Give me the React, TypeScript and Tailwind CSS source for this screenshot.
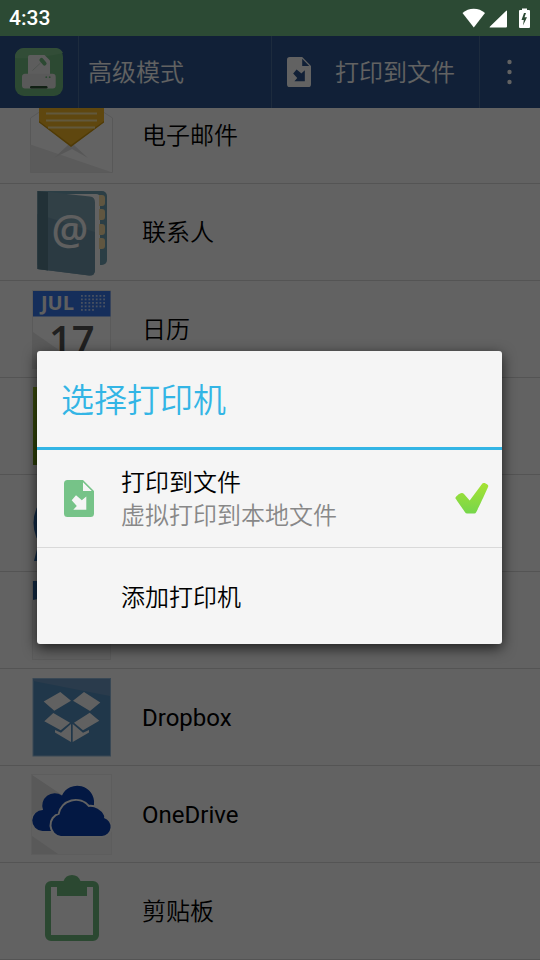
import type { ReactNode } from "react";
import clsx from "clsx";

const FileIcon = ({ className, arrow }: { className: string; arrow: string }) => (
    <svg viewBox="0 0 30 37" preserveAspectRatio="none" className={className} aria-hidden="true">
        <path fill="currentColor" d="M3.5 0H19l11 11v22.5a3.5 3.5 0 0 1-3.5 3.5h-23A3.5 3.5 0 0 1 0 33.5v-30A3.5 3.5 0 0 1 3.5 0z" />
        <path fill={arrow} d="M19 2.2V11h8.8zM12 15.3l5 4.2.8.8 4.5-3.9v13.4H9.3l3.5-3.9-5.1-5.6z" />
    </svg>
);

const AppLogo = () => (
    <svg viewBox="0 0 48 48" className="size-12" aria-hidden="true">
        <rect width="48" height="48" rx="9" fill="#6fb67d" />
        <path d="M0 10C12 11 30 9 48 5a9 9 0 0 0-9-5H9a9 9 0 0 0-9 10z" fill="#7ec08b" />
        <path d="M13 9a2 2 0 0 1 2-2h14.5l5.5 5.5V27H13z" fill="#e9e9e9" />
        <path d="M17.5 22.5l8-7.5" stroke="#c4d0c7" strokeWidth="1" />
        <path d="M26.5 12l3 3.5" stroke="#6fb67d" strokeWidth="4.2" strokeLinecap="round" />
        <path d="M10 25.7h27.5a3.2 3.2 0 0 1 3.2 3.2v8.6a3 3 0 0 1-3 3H10a3 3 0 0 1-3-3v-8.6a3.2 3.2 0 0 1 3-3.2z" fill="#dedede" />
        <rect x="15" y="38" width="17.5" height="2.5" rx="1.2" fill="#2c5034" />
        <circle cx="31.3" cy="29.2" r=".9" fill="#6fb67d" />
        <circle cx="34.7" cy="29.2" r=".9" fill="#6fb67d" />
    </svg>
);

const CheckMark = () => (
    <svg viewBox="0 0 34 31" className="h-[31px] w-[34px] shrink-0" aria-hidden="true">
        <defs>
            <linearGradient id="tick" x1="0" y1="0" x2="0" y2="1">
                <stop offset="0" stopColor="#a6e233" />
                <stop offset="1" stopColor="#76d64b" />
            </linearGradient>
        </defs>
        <path
            fill="url(#tick)"
            d="M.5 15.5C-.2 14.7 4 10.2 6.8 10.1q1.2-.1 2.2 1l5.7 6.4L26.8 1.2Q27.6 0 29 .1c1.5.1 4.6 1.8 4.3 3.1-.2 1-9 20.3-12 25.8q-.7 1.5-2 1.5h-7.1q-1.5 0-2.2-1.2C7.5 25.5 1.3 16.6.5 15.5z"
        />
    </svg>
);

// Every list icon is drawn on the same 84x96 board
const Board = ({ children }: { children: ReactNode }) => (
    <svg viewBox="0 0 84 96" className="h-24 w-[84px] shrink-0" aria-hidden="true">
        {children}
    </svg>
);

const MailIcon = () => (
    <Board>
        <path d="M.5 31L41 4l41.5 27v54.5H.5z" fill="#f8f8f8" stroke="#dcdcdc" />
        <path d="M.5 57.5l82 28H.5z" fill="#e3e3e3" />
        <path d="M24 71l14-13h6l14 13-16-9z" fill="#dadada" />
        <path d="M9 0h65v35L41 59 9 35z" fill="#edb226" />
        <path d="M9 34l32 24 33-24v1.5L41 60 9 35.5z" fill="#c8920e" />
        <path d="M16 26.5h51M16 33.5h51M18 40.5h47" stroke="#f2dc9a" strokeWidth="1.8" />
    </Board>
);

const ContactsIcon = () => (
    <Board>
        <path d="M7.5 7H72a5 5 0 0 1 5 5v64a5 5 0 0 1-5 5H7.5z" fill="#6d9bac" />
        <path d="M20 10h46q4 0 4 4v67H20z" fill="#f5f5f5" />
        <path d="M69 11h3q3 0 3 3v5q0 3-3 3h-3zM69 25h3q3 0 3 3v5q0 3-3 3h-3zM69 40h3q3 0 3 3v5q0 3-3 3h-3zM69 54h3q3 0 3 3v5q0 3-3 3h-3z" fill="#efd6a0" />
        <path d="M7.5 7L18 8l42 4.5q5 .5 5 6V86q0 6-6 5.5L7.5 85z" fill="#7ca0b0" />
        <path d="M7.5 30L65 48v38q0 6-6 5.5L7.5 85z" fill="#6d92a5" />
        <path d="M7.5 7L18 8v78.5L7.5 85z" fill="#557c8b" />
        <text x="40" y="61" textAnchor="middle" fontSize="41" fontWeight="600" fill="#eee" fontFamily="Open Sans, sans-serif">@</text>
    </Board>
);

const CalendarIcon = () => {
    const dots = Array.from({ length: 32 }, (_, i) => i);
    return (
        <Board>
            <rect x="2.5" y="9.5" width="78" height="78" fill="#f8f8f8" stroke="#e2e2e2" />
            <path d="M3 51l52 36H3z" fill="#e2e2e2" />
            <rect x="3" y="10" width="77.5" height="25.5" fill="#3674e4" />
            <text x="11" y="29" fontSize="20" fontWeight="700" fill="#eee" fontFamily="Open Sans, sans-serif">JUL</text>
            {dots.map(i => (
                <rect key={i} x={51 + (i % 7) * 3.7} y={14 + Math.floor(i / 7) * 3.5} width="1.8" height="1.8" fill="#b4caf2" />
            ))}
            <text x="19" y="74" fontSize="40" fontWeight="600" fill="#505050" fontFamily="Open Sans, sans-serif">17</text>
        </Board>
    );
};

const GreenTileIcon = () => (
    <Board>
        <defs>
            <linearGradient id="leaf" x1="0" y1="0" x2="0" y2="1">
                <stop offset="0" stopColor="#98c020" />
                <stop offset="1" stopColor="#6f9c14" />
            </linearGradient>
        </defs>
        <rect x="3" y="9" width="78" height="78" fill="url(#leaf)" />
    </Board>
);

const BubbleIcon = () => (
    <Board>
        <circle cx="41.5" cy="48" r="38" fill="#2867ad" />
        <path d="M8 70L4 86h26z" fill="#2867ad" />
    </Board>
);

const DocumentIcon = () => (
    <Board>
        <rect x="2.5" y="9.5" width="78" height="78" fill="#f0f0f0" stroke="#e4e4e4" />
        <path d="M3 9h78v3L3 28z" fill="#2f6aa8" />
    </Board>
);

const DropboxIcon = () => (
    <Board>
        <rect x="3" y="9.5" width="77.5" height="77.5" fill="#528ab8" stroke="#8eb4d4" />
        <path d="M3.5 10H80v17L3.5 12z" fill="#6a94bd" />
        <path
            fill="#f2f2f2"
            d="M13.7 32.5L30.3 23 41 31.7 24.3 41.7zM43 31.7L54 23l16.3 10.5L60 42zM14.3 52.3l9-8.3L40 53.7l-9.3 7.6zM44 53.7l15.7-10 9.6 8L53 61.3zM25 61l6 2.7L41 55v18l-16-9.5zM42.7 55L53 63.7l6-2.7v2.5L42.7 73z"
        />
    </Board>
);

const OneDriveIcon = () => {
    const front = "M31 70a11 11 0 0 1-1.5-21.5 16.5 16.5 0 0 1 29-7.5 15 15 0 0 1 15.5 8.5q.5 1.5 0 2.5a9.2 9.2 0 0 1-2 18z";
    return (
        <Board>
            <rect x="1.5" y="8.5" width="80" height="80" fill="#f8f8f8" stroke="#e8e8e8" />
            <path d="M2 9l79 53v26H2z" fill="#efefef" />
            <path d="M2 9l30 20-30 20zM2 70l26 18H2z" fill="#dedede" />
            <path d="M12.5 65A10.5 10.5 0 0 1 13 44a12.5 12.5 0 0 1 19-14.5 16.8 16.8 0 0 1 32 8.5v7L30 65z" fill="#083ca8" />
            <path d={front} fill="#f5f5f5" stroke="#f5f5f5" strokeWidth="4" />
            <path d={front} fill="#083ca8" />
        </Board>
    );
};

const ClipboardIcon = () => (
    <Board>
        <rect x="18" y="21" width="48" height="54" rx="3" fill="none" stroke="#6cb47b" strokeWidth="6" />
        <path fill="#6cb47b" fillRule="evenodd" d="M27 18h6.5a9 9 0 0 1 17 0H57v15H27zM45 21a3 3 0 1 0-6 0 3 3 0 0 0 6 0z" />
    </Board>
);

type Source = {
    id: string;
    label: string;
    icon: ReactNode;
    latin?: boolean;
};

const sources: Source[] = [
    { id: "mail", label: "电子邮件", icon: <MailIcon /> },
    { id: "contacts", label: "联系人", icon: <ContactsIcon /> },
    { id: "calendar", label: "日历", icon: <CalendarIcon /> },
    { id: "green", label: "", icon: <GreenTileIcon /> },
    { id: "bubble", label: "", icon: <BubbleIcon /> },
    { id: "document", label: "", icon: <DocumentIcon /> },
    { id: "dropbox", label: "Dropbox", icon: <DropboxIcon />, latin: true },
    { id: "onedrive", label: "OneDrive", icon: <OneDriveIcon />, latin: true },
    { id: "clipboard", label: "剪贴板", icon: <ClipboardIcon /> },
];

function StatusBar() {
    return (
        <div className="flex h-9 items-center bg-[#2c4a34] pl-[9px] pr-[10px] text-white">
            <span className="flex-1 pt-0.5 text-[21px] font-medium">4:33</span>
            <svg viewBox="0 0 68 20" className="h-5 w-[68px]" fill="currentColor" aria-hidden="true">
                <path d="M.5 5a17 17 0 0 1 22.5 0L11.8 19.5z" />
                <path d="M44 3q1-1 1 0v15.5q0 1-1 1H28q-1 0 0-1z" />
                <path fillRule="evenodd" d="M60 .5h5V2h2q1 0 1 1v16q0 1-1 1h-9q-1 0-1-1V3q0-1 1-1h2zM62 5l-2.5 7h2.3L61 17.5l4-8.2h-2.5L64 5z" />
            </svg>
        </div>
    );
}

function Toolbar() {
    return (
        <header className="flex h-[72px] divide-x divide-[#496c99] bg-[#2b5289] text-2xl text-[#f5f5f5]">
            <button className="flex w-[79px] items-center pl-[15px]" aria-label="主页">
                <AppLogo />
            </button>
            <button className="flex-1 pl-[9px] pt-0.5 text-left font-[350]">高级模式</button>
            <button className="flex w-52 items-center gap-6 pl-[15px] font-[350]">
                <FileIcon className="h-[30px] w-6 text-[#f5f5f5]" arrow="#2b5289" />
                <span className="pt-0.5">打印到文件</span>
            </button>
            <button className="flex w-[60px] items-center justify-center" aria-label="更多">
                <svg viewBox="0 0 6 26" className="h-[26px] w-1.5" fill="currentColor" aria-hidden="true">
                    <circle cx="2.5" cy="3" r="2.2" />
                    <circle cx="2.5" cy="13" r="2.2" />
                    <circle cx="2.5" cy="23" r="2.2" />
                </svg>
            </button>
        </header>
    );
}

function PrinterDialog() {
    return (
        <div
            role="dialog"
            aria-labelledby="dialog-title"
            className="ml-[37px] mr-[38px] w-full overflow-hidden rounded-[3px] bg-[#f5f5f5] font-[350] shadow-[0_4px_14px_rgba(0,0,0,0.7)]"
        >
            <h2 id="dialog-title" className="flex h-[99px] items-center border-b-[3px] border-[#33b5e5] pl-6 pt-1 text-[33px] text-[#33b5e5]">
                选择打印机
            </h2>
            <button className="flex h-[98px] w-full items-center border-b border-[#d9d9d9] pr-[13px] text-left">
                <span className="w-[84px] pl-[27px]">
                    <FileIcon className="h-[37px] w-[30px] text-[#76c388]" arrow="#f5f5f5" />
                </span>
                <span className="flex-1 pt-0.5 text-2xl leading-[33px] text-black">
                    打印到文件
                    <span className="block text-[#888888]">虚拟打印到本地文件</span>
                </span>
                <CheckMark />
            </button>
            <button className="flex h-24 w-full items-center pl-[84px] pt-1 text-left text-2xl text-black">添加打印机</button>
        </div>
    );
}

export default function App() {
    return (
        <div className="flex min-h-screen flex-col bg-[#f5f5f5] font-['Roboto','Noto_Sans_CJK_SC',sans-serif]">
            <StatusBar />
            <main className="relative flex-1">
                <Toolbar />
                <div className="overflow-hidden">
                    <ul className="-mt-[21px]">
                        {sources.map(s => (
                            <li key={s.id} className="border-b border-[#d2d2d2]">
                                <button className="flex h-24 w-full items-center gap-7 pl-[30px] text-left text-2xl text-black">
                                    {s.icon}
                                    <span className={clsx("pt-0.5", s.latin ? "font-normal" : "font-[350]")}>{s.label}</span>
                                </button>
                            </li>
                        ))}
                    </ul>
                </div>
                <div className="absolute inset-0 flex items-center bg-black/60 pb-px">
                    <PrinterDialog />
                </div>
            </main>
        </div>
    );
}
